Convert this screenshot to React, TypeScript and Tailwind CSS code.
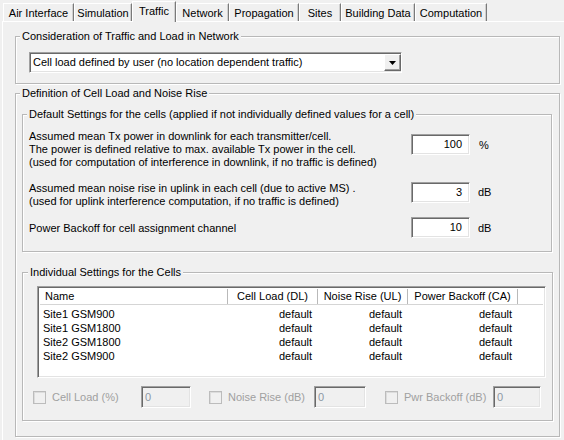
import React from 'react';

const tabs = ['Air Interface', 'Simulation', 'Traffic', 'Network', 'Propagation', 'Sites', 'Building Data', 'Computation'];
const tabWidths = ['w-[71px]', 'w-[58px]', 'w-[44px]', 'w-[53px]', 'w-[70px]', 'w-[42px]', 'w-[74px]', 'w-[72px]'];

const cells = ['Site1 GSM900', 'Site1 GSM1800', 'Site2 GSM1800', 'Site2 GSM900'];

const sunken = 'border border-t-[#a0a0a0] border-l-[#a0a0a0] border-b-white border-r-white shadow-[inset_1px_1px_0_#696969,inset_-1px_-1px_0_#e3e3e3]';
const groupBox = 'border border-[#b8b8b8] shadow-[inset_1px_1px_0_#fff,1px_1px_0_#fff] p-0';
const legendCls = 'px-[2px] bg-[#f0f0f0] leading-[13px]';

const NumBox: React.FC<{ value: string }> = ({ value }) => (
    <div className={`w-[59px] h-[21px] bg-white ${sunken} flex items-center justify-end pr-[7px]`}>
        {value}
    </div>
);

const DisabledCheck: React.FC<{ label: string }> = ({ label }) => (
    <div className="flex items-center gap-[6px] text-[#a0a0a0] whitespace-nowrap">
        <div className="w-[13px] h-[13px] border border-[#bcbcbc] bg-[#f0f0f0] shadow-[inset_1px_1px_0_#dcdcdc]" />
        <span>{label}</span>
    </div>
);

const DisabledInput: React.FC<{ w: string }> = ({ w }) => (
    <div className={`${w} h-[22px] ${sunken} bg-[#f0f0f0] flex items-center pl-[3px] text-[#8d97a5]`}>0</div>
);

export default function App() {
    return (
        <div
            className="w-[564px] h-[440px] overflow-hidden bg-[#f0f0f0] text-black text-[11px] leading-[13px]"
            style={{ fontFamily: '"Liberation Sans", Arial, sans-serif' }}
        >
            {/* tab strip */}
            <div className="flex items-end h-[21px] pl-[3px]">
                {tabs.map((t, i) => {
                    const active = t === 'Traffic';
                    return (
                        <div
                            key={t}
                            className={`${tabWidths[i]} ${active ? 'h-[21px] relative z-10 -mb-[1px] bg-[#f0f0f0] pt-[3px]' : 'h-[18px] pt-[3px]'} border-t border-l border-white border-r border-r-[#7a7a7a] shadow-[inset_-1px_0_0_#d0d0d0] flex justify-center whitespace-nowrap`}
                        >
                            {t}
                        </div>
                    );
                })}
            </div>

            {/* panel */}
            <div className="ml-[2px] w-[580px] h-[440px] border-t border-l border-white pl-[12px] pt-[8px]">
                <fieldset className={`w-[545px] h-[54px] ${groupBox}`}>
                    <legend className={`ml-[4px] ${legendCls}`}>Consideration of Traffic and Load in Network</legend>
                    <div className="pl-[13px] pt-[9px]">
                        <div className={`w-[373px] h-[21px] bg-white ${sunken} flex items-center justify-between`}>
                            <span className="pl-[3px]">Cell load defined by user (no location dependent traffic)</span>
                            <div className="w-[17px] h-[17px] bg-[#f0f0f0] border border-t-white border-l-white border-b-[#696969] border-r-[#696969] shadow-[inset_-1px_-1px_0_#a0a0a0] flex items-center justify-center">
                                <svg width="7" height="4" viewBox="0 0 7 4"><path d="M0 0h7L3.5 4z" fill="#000" /></svg>
                            </div>
                        </div>
                    </div>
                </fieldset>

                <fieldset className={`mt-[3px] w-[545px] h-[350px] ${groupBox}`}>
                    <legend className={`ml-[4px] ${legendCls}`}>Definition of Cell Load and Noise Rise</legend>
                    <div className="pl-[6px] pt-[8px]">
                        {/* defaults */}
                        <fieldset className={`w-[530px] h-[144px] ${groupBox}`}>
                            <legend className={`ml-[4px] ${legendCls}`}>Default Settings for the cells (applied if not individually defined values for a cell)</legend>
                            <div className="pl-[6px] pt-[9px]">
                                <div className="flex items-start">
                                    <div className="w-[382px]">
                                        Assumed mean Tx power in downlink for each transmitter/cell.<br />
                                        The power is defined relative to max. available Tx power in the cell.<br />
                                        (used for computation of interference in downlink, if no traffic is defined)
                                    </div>
                                    <div className="mt-[4px]"><NumBox value="100" /></div>
                                    <span className="ml-[9px] mt-[9px]">%</span>
                                </div>
                                <div className="flex items-start mt-[13px]">
                                    <div className="w-[382px]">
                                        Assumed mean noise rise in uplink in each cell (due to active MS) .<br />
                                        (used for uplink interference computation, if no traffic is defined)
                                    </div>
                                    <NumBox value="3" />
                                    <span className="ml-[8px] mt-[4px]">dB</span>
                                </div>
                                <div className="flex items-start mt-[9px]">
                                    <div className="w-[382px] mt-[5px]">Power Backoff for cell assignment channel</div>
                                    <NumBox value="10" />
                                    <span className="ml-[8px] mt-[5px]">dB</span>
                                </div>
                            </div>
                        </fieldset>

                        {/* individual */}
                        <fieldset className={`mt-[14px] w-[531px] h-[155px] ${groupBox}`}>
                            <legend className={`ml-[5px] ${legendCls}`}>Individual Settings for the Cells</legend>
                            <div className="pt-[7px]">
                                <div className={`ml-[14px] w-[509px] h-[92px] bg-white ${sunken} p-[2px]`}>
                                    <div className="flex h-[16px] border-b border-[#d5d5d5] leading-[15px]">
                                        <div className="w-[188px] pl-[5px] border-r border-[#b9b9b9]">Name</div>
                                        <div className="w-[90px] text-center border-r border-[#b9b9b9]">Cell Load (DL)</div>
                                        <div className="w-[90px] text-center border-r border-[#b9b9b9]">Noise Rise (UL)</div>
                                        <div className="w-[110px] text-center border-r border-[#b9b9b9]">Power Backoff (CA)</div>
                                    </div>
                                    <div className="pt-[2px] leading-[14px]">
                                        {cells.map(c => (
                                            <div key={c} className="flex h-[14px]">
                                                <div className="w-[188px] pl-[3px]">{c}</div>
                                                <div className="w-[90px] text-right pr-[6px]">default</div>
                                                <div className="w-[90px] text-right pr-[6px]">default</div>
                                                <div className="w-[110px] text-right pr-[6px]">default</div>
                                            </div>
                                        ))}
                                    </div>
                                </div>

                                {/* disabled edit row */}
                                <div className="flex items-center mt-[8px] ml-[10px]">
                                    <div className="w-[108px]"><DisabledCheck label="Cell Load (%)" /></div>
                                    <DisabledInput w="w-[50px]" />
                                    <div className="ml-[18px] w-[105px]"><DisabledCheck label="Noise Rise (dB)" /></div>
                                    <DisabledInput w="w-[52px]" />
                                    <div className="ml-[19px] w-[108px]"><DisabledCheck label="Pwr Backoff (dB)" /></div>
                                    <DisabledInput w="w-[48px]" />
                                </div>
                            </div>
                        </fieldset>
                    </div>
                </fieldset>
            </div>
        </div>
    );
}
